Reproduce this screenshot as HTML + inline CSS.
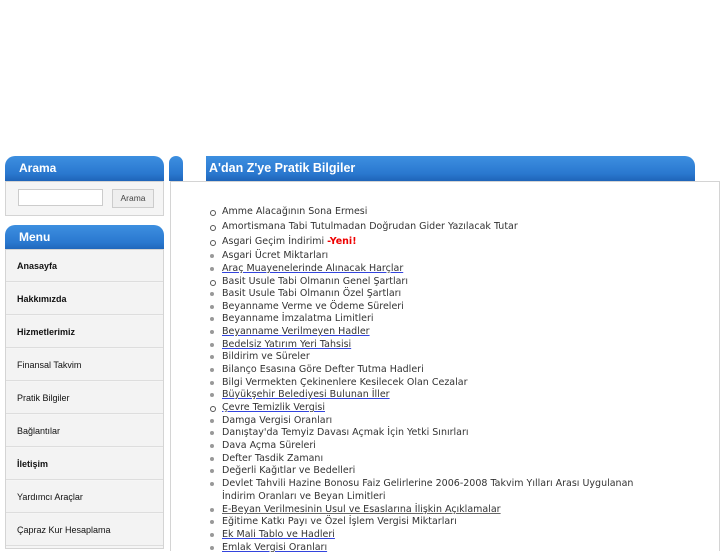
<!DOCTYPE html>
<html><head><meta charset="utf-8"><style>
*{margin:0;padding:0;box-sizing:border-box}
body{width:727px;height:545px;background:#fff;position:relative;overflow:hidden;font-family:"Liberation Sans",sans-serif}
.hdr{position:absolute;background:linear-gradient(#3d8fe0,#2a78cf 70%,#1f64b8);border-radius:10px 10px 0 0;color:#fff;font-weight:bold;font-size:12px;padding-left:14px;line-height:24px}
.box{position:absolute;border:1px solid #d4d4d4;background:#f5f5f5}
.mi{position:absolute;left:6px;width:157px;height:32px;border-bottom:1px solid #ddd;background:#f3f3f3;font-size:9px;line-height:32px;padding-left:11px;color:#111}
.b{font-weight:bold}
.li{position:absolute;left:222px;font-family:"DejaVu Sans",sans-serif;font-size:9.5px;color:#333;white-space:nowrap;line-height:12.6px}
.li:before{content:"";position:absolute;left:-12px;top:4px;width:4px;height:4px;border-radius:50%;background:#999}
.c:before{background:#fff;border:1px solid #555;width:4px;height:4px;top:4px}
.u{text-decoration:underline;text-decoration-color:#3344dd}
.g{text-decoration:underline;text-decoration-color:#666}
</style></head><body>
<div class="hdr" style="left:5px;top:156px;width:159px;height:25px">Arama</div>
<div class="box" style="left:5px;top:181px;width:159px;height:35px"></div>
<div style="position:absolute;left:18px;top:189px;width:85px;height:17px;border:1px solid #ccc;background:#fff"></div>
<div style="position:absolute;left:112px;top:189px;width:42px;height:19px;border:1px solid #ccc;background:#eee;font-size:8.5px;color:#444;text-align:center;line-height:17px">Arama</div>
<div class="hdr" style="left:5px;top:225px;width:159px;height:25px">Menu</div>
<div class="box" style="left:5px;top:249px;width:159px;height:300px"></div>
<div class="mi b" style="top:250px">Anasayfa</div>
<div class="mi b" style="top:283px">Hakkımızda</div>
<div class="mi b" style="top:316px">Hizmetlerimiz</div>
<div class="mi" style="top:349px">Finansal Takvim</div>
<div class="mi" style="top:382px">Pratik Bilgiler</div>
<div class="mi" style="top:415px">Bağlantılar</div>
<div class="mi b" style="top:448px">İletişim</div>
<div class="mi" style="top:481px">Yardımcı Araçlar</div>
<div class="mi" style="top:514px">Çapraz Kur Hesaplama</div>
<div class="hdr" style="left:169px;top:156px;width:14px;height:25px;padding:0"></div>
<div class="hdr" style="left:206px;top:156px;width:489px;height:25px;border-radius:0 10px 0 0;padding-left:3px;font-size:12.5px">A'dan Z'ye Pratik Bilgiler</div>
<div style="position:absolute;left:170px;top:181px;width:550px;height:370px;border:1px solid #d4d4d4;border-bottom:none"></div>
<div class="li c" style="top:206px">Amme Alacağının Sona Ermesi</div>
<div class="li c" style="top:221px">Amortismana Tabi Tutulmadan Doğrudan Gider Yazılacak Tutar</div>
<div class="li c" style="top:236px">Asgari Geçim İndirimi <b style="color:#e00;font-family:'DejaVu Sans'">-Yeni!</b></div>
<div class="li" style="top:250px">Asgari Ücret Miktarları</div>
<div class="li u" style="top:263px">Araç Muayenelerinde Alınacak Harçlar</div>
<div class="li c" style="top:276px">Basit Usule Tabi Olmanın Genel Şartları</div>
<div class="li" style="top:288px">Basit Usule Tabi Olmanın Özel Şartları</div>
<div class="li" style="top:301px">Beyanname Verme ve Ödeme Süreleri</div>
<div class="li" style="top:313px">Beyanname İmzalatma Limitleri</div>
<div class="li u" style="top:326px">Beyanname Verilmeyen Hadler</div>
<div class="li u" style="top:339px">Bedelsiz Yatırım Yeri Tahsisi</div>
<div class="li" style="top:351px">Bildirim ve Süreler</div>
<div class="li" style="top:364px">Bilanço Esasına Göre Defter Tutma Hadleri</div>
<div class="li" style="top:377px">Bilgi Vermekten Çekinenlere Kesilecek Olan Cezalar</div>
<div class="li u" style="top:389px">Büyükşehir Belediyesi Bulunan İller</div>
<div class="li c u" style="top:402px">Çevre Temizlik Vergisi</div>
<div class="li" style="top:415px">Damga Vergisi Oranları</div>
<div class="li" style="top:427px">Danıştay'da Temyiz Davası Açmak İçin Yetki Sınırları</div>
<div class="li" style="top:440px">Dava Açma Süreleri</div>
<div class="li" style="top:453px">Defter Tasdik Zamanı</div>
<div class="li" style="top:465px">Değerli Kağıtlar ve Bedelleri</div>
<div class="li" style="top:478px">Devlet Tahvili Hazine Bonosu Faiz Gelirlerine 2006-2008 Takvim Yılları Arası Uygulanan<br>İndirim Oranları ve Beyan Limitleri</div>
<div class="li g" style="top:504px">E-Beyan Verilmesinin Usul ve Esaslarına İlişkin Açıklamalar</div>
<div class="li" style="top:516px">Eğitime Katkı Payı ve Özel İşlem Vergisi Miktarları</div>
<div class="li u" style="top:529px">Ek Mali Tablo ve Hadleri</div>
<div class="li u" style="top:542px">Emlak Vergisi Oranları</div>
</body></html>
